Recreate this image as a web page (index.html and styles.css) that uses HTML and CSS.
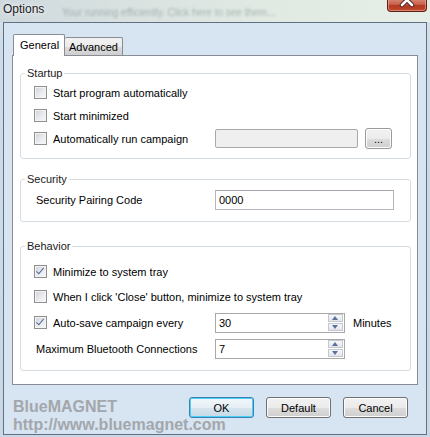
FILE: index.html
```html
<!DOCTYPE html>
<html lang="en">
<head>
  <meta charset="UTF-8">
  <meta name="viewport" content="width=device-width, initial-scale=1.0">
  <title>Options</title>
  <link rel="stylesheet" href="styles.css">
</head>
<body>
  <div class="window">
    <div class="titlebar">
      <span class="title">Options</span>
      <span class="behind">Your running efficiently. Click here to see them...</span>
      <div class="close-btn">
        <svg width="40" height="13" viewBox="0 0 40 13">
          <path d="M15 -4 L25 6 M25 -4 L15 6" stroke="#4a1a14" stroke-width="4.5" stroke-linecap="round"/>
          <path d="M15 -4 L25 6 M25 -4 L15 6" stroke="#fff" stroke-width="2.6" stroke-linecap="round"/>
        </svg>
      </div>
    </div>
    <div class="client">
      <div class="tabs">
        <div class="tab active">General</div>
        <div class="tab">Advanced</div>
      </div>
      <div class="panel">
        <fieldset class="group startup">
          <legend>Startup</legend>
          <div class="row">
            <span class="check"></span>
            <span>Start program automatically</span>
          </div>
          <div class="row">
            <span class="check"></span>
            <span>Start minimized</span>
          </div>
          <div class="row">
            <div class="lead"><span class="check"></span><span>Automatically run campaign</span></div>
            <div class="textbox disabled campaign"></div>
            <button class="btn browse">...</button>
          </div>
        </fieldset>

        <fieldset class="group security">
          <legend>Security</legend>
          <div class="row">
            <div class="lead"><span class="plain">Security Pairing Code</span></div>
            <div class="textbox code">0000</div>
          </div>
        </fieldset>

        <fieldset class="group behavior">
          <legend>Behavior</legend>
          <div class="row">
            <span class="check checked"></span>
            <span>Minimize to system tray</span>
          </div>
          <div class="row">
            <span class="check"></span>
            <span>When I click 'Close' button, minimize to system tray</span>
          </div>
          <div class="row">
            <div class="lead"><span class="check checked"></span><span>Auto-save campaign every</span></div>
            <div class="spinner">
              <span class="value">30</span>
              <div class="spin"><span class="up"></span><span class="down"></span></div>
            </div>
            <span class="unit">Minutes</span>
          </div>
          <div class="row">
            <div class="lead"><span class="plain">Maximum Bluetooth Connections</span></div>
            <div class="spinner">
              <span class="value">7</span>
              <div class="spin"><span class="up"></span><span class="down"></span></div>
            </div>
          </div>
        </fieldset>
      </div>

      <div class="footer">
        <div class="brand">
          <div>BlueMAGNET</div>
          <div>http://www.bluemagnet.com</div>
        </div>
        <div class="buttons">
          <button class="btn default">OK</button>
          <button class="btn">Default</button>
          <button class="btn">Cancel</button>
        </div>
      </div>
    </div>
  </div>
</body>
</html>
```

FILE: styles.css
```css
html, body {
  margin: 0;
  padding: 0;
}
body {
  width: 430px;
  height: 437px;
  overflow: hidden;
  font-family: "Liberation Sans", Arial, sans-serif;
  font-size: 11px;
  color: #000;
  background: linear-gradient(to bottom, #dfe6e6 0px, #cfdbe6 40px, #c9d7e6 100%);
}
.window {
  width: 430px;
  height: 437px;
  display: flex;
  flex-direction: column;
}
.titlebar {
  position: relative;
  height: 22px;
  background: linear-gradient(to right, #cfd8dd 0%, #d9e2e0 30%, #e2ebe3 70%, #e6eee8 100%);
  overflow: hidden;
}
.title {
  position: relative;
  z-index: 1;
  display: inline-block;
  padding: 2px 0 0 3px;
  font-size: 12px;
  line-height: 15px;
  color: #1b1b1b;
  text-shadow: 0 0 6px #eef3f5, 0 0 3px #eef3f5;
}
.behind {
  position: absolute;
  left: 62px;
  top: 7px;
  font-size: 10px;
  color: rgba(70, 85, 95, 0.35);
  filter: blur(1.3px);
  white-space: nowrap;
}
.close-btn {
  position: absolute;
  left: 387px;
  top: -1px;
  width: 40px;
  height: 13px;
  border: 1px solid #5b2016;
  border-top: none;
  border-radius: 0 0 4px 4px;
  box-sizing: border-box;
  background: linear-gradient(to bottom, #d88a78 0%, #c8604a 45%, #b23a22 55%, #c04c30 100%);
  box-shadow: inset 0 0 0 1px rgba(255, 190, 170, 0.5);
  overflow: hidden;
}
.close-btn svg {
  display: block;
  margin-left: -1px;
}

.client {
  margin: 0 3px 0 3px;
  height: 413px;
  box-sizing: border-box;
  border: 1px solid #5f7080;
  background: #d7e4f2;
  display: flex;
  flex-direction: column;
}

.tabs {
  display: flex;
  align-items: flex-end;
  height: 21px;
  margin-top: 11px;
  padding-left: 9px;
}
.tab {
  box-sizing: border-box;
  height: 18px;
  padding: 0 4px 0 4px;
  border: 1px solid #898c95;
  border-bottom: none;
  border-left: none;
  border-radius: 2px 2px 0 0;
  background: linear-gradient(to bottom, #f2f2f2 0%, #ebebeb 50%, #dddddd 51%, #cfcfcf 100%);
  line-height: 18px;
}
.tab.active {
  position: relative;
  z-index: 1;
  height: 22px;
  margin-bottom: -1px;
  width: 52px;
  padding: 0 0 0 6px;
  border-left: 1px solid #898c95;
  background: #fff;
  line-height: 20px;
}

.panel {
  margin-left: 8px;
  width: 406px;
  height: 331px;
  box-sizing: border-box;
  border: 1px solid #898c95;
  background: #fff;
  padding: 11px 6px 0 7px;
}

.group {
  margin: 0;
  padding: 0;
  border: 1px solid #d5dde3;
  border-radius: 3px;
  min-width: 0;
}
.group legend {
  margin-left: 4px;
  padding: 0 2px;
  line-height: 13px;
  color: #1a1a1a;
}
.startup {
  padding: 1px 0 8px;
}
.security {
  margin-top: 14px;
  padding: 2px 0 10px;
}
.behavior {
  margin-top: 18px;
  padding: 6px 0 9px;
}
.startup .row,
.security .row {
  height: 23px;
}
.behavior .row {
  height: 25px;
}
.behavior .row:nth-child(n+4) {
  padding-top: 1px;
}

.row {
  display: flex;
  align-items: center;
  gap: 6px;
  padding-left: 13px;
  white-space: nowrap;
}
.lead {
  display: flex;
  align-items: center;
  gap: 6px;
  width: 181px;
  flex: none;
}
.row .lead + * {
  margin-left: -6px;
}
.plain {
  padding-left: 2px;
}

.check {
  flex: none;
  width: 13px;
  height: 13px;
  box-sizing: border-box;
  border: 1px solid #8f8f8f;
  background: linear-gradient(135deg, #cdd1d6 0%, #e9ebee 55%, #f8f8f8 100%);
  box-shadow: inset 0 0 0 1px #f4f4f4;
  position: relative;
}
.check.checked::after {
  content: "";
  position: absolute;
  left: 3px;
  top: 0px;
  width: 3px;
  height: 7px;
  border: solid #5366a6;
  border-width: 0 1.5px 1.5px 0;
  transform: rotate(40deg);
}

.textbox {
  box-sizing: border-box;
  height: 20px;
  border: 1px solid #b3b7bd;
  border-top-color: #a3a7ad;
  background: #fff;
  padding: 0 3px;
  line-height: 18px;
}
.textbox.disabled {
  background: #efefef;
  border-color: #a9a9a9;
  border-radius: 2px;
}
.campaign {
  width: 143px;
  height: 19px;
}
.code {
  width: 179px;
}

.spinner {
  box-sizing: border-box;
  width: 130px;
  height: 20px;
  border: 1px solid #a9a9a9;
  display: flex;
  align-items: center;
  justify-content: space-between;
  padding: 0 1px 0 3px;
}
.spinner .value {
  line-height: 18px;
}
.spin {
  display: flex;
  flex-direction: column;
  gap: 1px;
  width: 15px;
}
.spin span {
  position: relative;
  height: 8px;
  box-sizing: border-box;
  border: 1px solid #c4c8ce;
  background: linear-gradient(to bottom, #f7f8fa, #e2e5ea);
}
.spin span::after {
  content: "";
  position: absolute;
  left: 3px;
  width: 0;
  height: 0;
  border-left: 3.5px solid transparent;
  border-right: 3.5px solid transparent;
}
.spin .up::after {
  top: 1px;
  border-bottom: 4px solid #5d6f9c;
}
.spin .down::after {
  top: 1px;
  border-top: 4px solid #5d6f9c;
}
.unit {
  margin-left: 2px;
}

.btn {
  box-sizing: border-box;
  font-family: "Liberation Sans", Arial, sans-serif;
  font-size: 11px;
  color: #000;
  height: 21px;
  padding: 0;
  border: 1px solid #707070;
  border-radius: 3px;
  background: linear-gradient(to bottom, #f2f2f2 0%, #ebebeb 50%, #dddddd 51%, #cfcfcf 100%);
  box-shadow: inset 0 0 0 1px #fcfcfc;
}
.btn.browse {
  width: 27px;
  height: 21px;
  margin-left: 1px;
  line-height: 14px;
  border-color: #9a9a9a;
}
.btn.default {
  border-color: #3c7fb1;
  box-shadow: inset 0 0 0 1px #48d0f8;
  background: linear-gradient(to bottom, #f2f7fa 0%, #e6eff5 50%, #d7e5ee 51%, #c6d9e6 100%);
}

.footer {
  display: grid;
  padding: 0 18px 0 9px;
}
.brand,
.buttons {
  grid-area: 1 / 1;
}
.brand {
  margin-top: 13px;
  font-size: 16px;
  font-weight: bold;
  line-height: 18px;
  color: #a3a7ab;
}
.buttons {
  justify-self: end;
  align-self: start;
  margin-top: 12px;
  display: flex;
  gap: 12px;
}
.buttons .btn {
  width: 65px;
}
```
